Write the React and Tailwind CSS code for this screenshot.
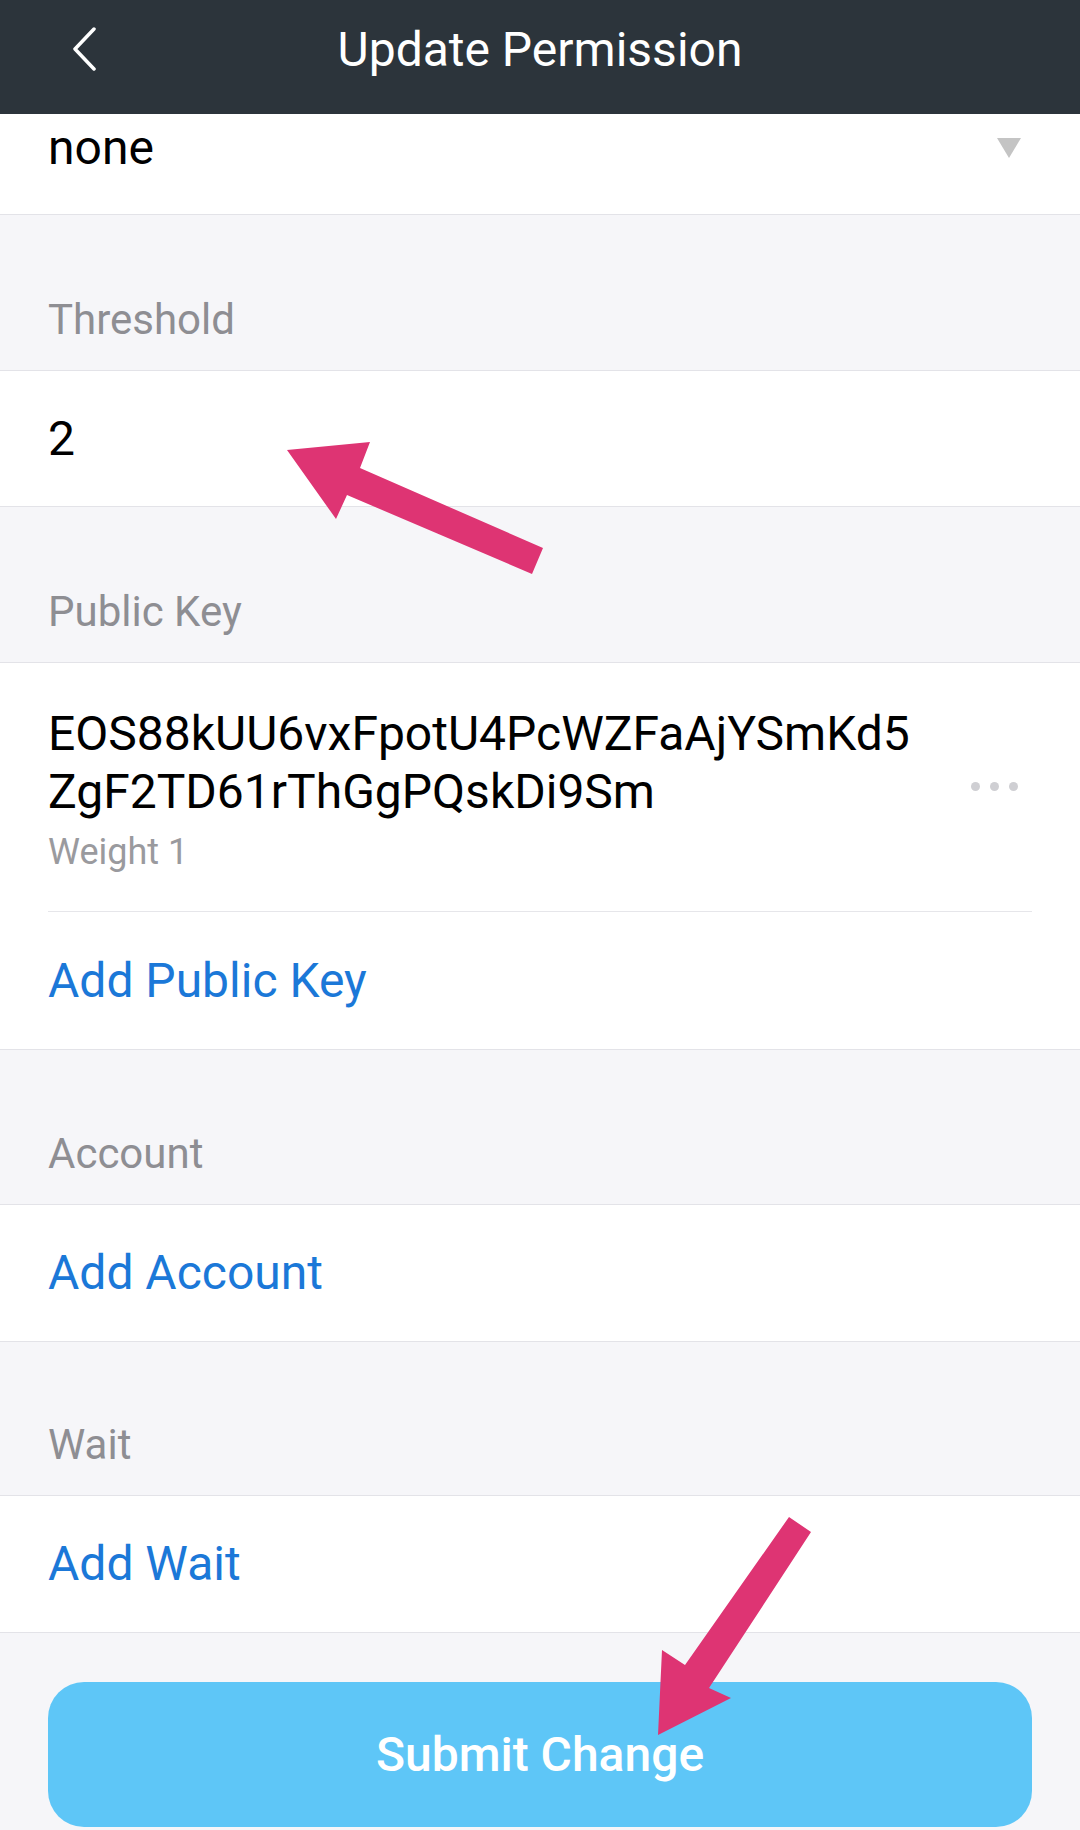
const font = { fontFamily: "Roboto, 'Noto Sans', Arial, sans-serif" };

const Label = ({ children, h }) => (
    <div className={`flex items-end px-[48px] pb-[29px] ${h}`}>
        <span className="text-[42px] leading-none text-[#8e8e93]">{children}</span>
    </div>
);

const LinkRow = ({ children }) => (
    <div className="flex h-[138px] items-center border-y border-[#e3e3e8] bg-white px-[48px]">
        <span className="text-[48px] leading-none text-[#1b78d8]">{children}</span>
    </div>
);

export default function App() {
    return (
        <div style={font} className="relative h-[1830px] w-[1080px] overflow-hidden bg-[#f6f6f9]">
            {/* Header */}
            <div className="relative flex h-[114px] items-center justify-center bg-[#2c343b] pb-[14px]">
                <svg className="absolute left-[70px] top-[27px]" width="28" height="44" viewBox="0 0 28 44">
                    <path d="M24 2 L5 22 L24 42" fill="none" stroke="white" strokeWidth="3.5" strokeLinecap="round" strokeLinejoin="round" />
                </svg>
                <span className="text-[48px] leading-none text-white">Update Permission</span>
            </div>

            {/* Selected permission */}
            <div className="flex h-[101px] items-start justify-between border-b border-[#e3e3e8] bg-white pl-[48px] pr-[58px] pt-[10px]">
                <span className="text-[48px] leading-none text-black">none</span>
                <svg className="mt-[13px]" width="26" height="22" viewBox="0 0 26 22">
                    <path d="M1 1 H25 L13 21 Z" fill="#c4c4c4" />
                </svg>
            </div>

            <Label h="h-[155px]">Threshold</Label>
            <div className="flex h-[137px] items-center border-y border-[#e3e3e8] bg-white px-[48px]">
                <span className="text-[48px] leading-none text-black">2</span>
            </div>

            <Label h="h-[155px]">Public Key</Label>
            <div className="border-t border-[#e3e3e8] bg-white">
                <div className="mx-[48px] flex h-[249px] items-start justify-between border-b border-[#e6e6ea] pt-[42px]">
                    <div>
                        <p className="text-[48px] leading-[58px] text-black">
                            EOS88kUU6vxFpotU4PcWZFaAjYSmKd5<br />ZgF2TD61rThGgPQskDi9Sm
                        </p>
                        <p className="mt-[13px] text-[36px] leading-none text-[#9a9a9e]">Weight 1</p>
                    </div>
                    <div className="mr-[14px] mt-[77px] flex gap-[10px]">
                        <span className="h-[9px] w-[9px] rounded-full bg-[#cfcfd3]" />
                        <span className="h-[9px] w-[9px] rounded-full bg-[#cfcfd3]" />
                        <span className="h-[9px] w-[9px] rounded-full bg-[#cfcfd3]" />
                    </div>
                </div>
                <div className="flex h-[138px] items-center border-b border-[#e3e3e8] px-[48px]">
                    <span className="text-[48px] leading-none text-[#1b78d8]">Add Public Key</span>
                </div>
            </div>

            <Label h="h-[154px]">Account</Label>
            <LinkRow>Add Account</LinkRow>

            <Label h="h-[153px]">Wait</Label>
            <LinkRow>Add Wait</LinkRow>

            <div className="px-[48px] pt-[49px]">
                <button className="flex h-[145px] w-full items-center justify-center rounded-[36px] bg-[#5ec6f7] text-[48px] font-medium leading-none text-white">
                    Submit Change
                </button>
            </div>

            {/* Annotation arrows */}
            <svg className="pointer-events-none absolute left-0 top-0" width="1080" height="1830" viewBox="0 0 1080 1830">
                <polygon points="287,450 370,442 360,468 543,548 532,574 347,495 336,519" fill="#de3473" />
                <polygon points="658,1735 662,1650 685,1665 789,1517 811,1532 709,1688 731,1698" fill="#de3473" />
            </svg>
        </div>
    );
}
